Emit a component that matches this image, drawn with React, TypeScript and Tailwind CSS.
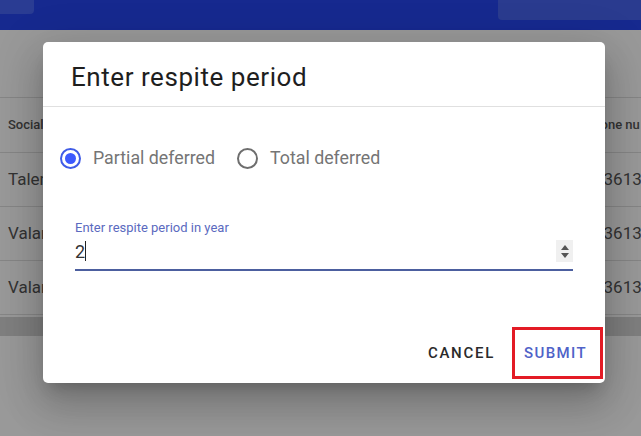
import React from "react";

export default function App() {
  const rows = ["Talent", "Valar", "Valar"];
  return (
    <div className="relative w-[641px] h-[436px] overflow-hidden bg-white" style={{ fontFamily: "Roboto, 'Noto Sans', sans-serif" }}>
      {/* top app bar */}
      <div className="relative z-20 h-[30px] bg-[#16298f] flex justify-between items-start">
        <div className="w-[34px] h-[14px] bg-[#2a3c93] rounded-br-[4px]" />
        <div className="w-[143px] h-[20px] bg-[#2a3b8f] rounded-bl-[4px]" />
      </div>

      {/* page behind */}
      <div className="flex flex-col">
        <div className="h-[67px]" />
        <div className="border-t border-[#e0e0e0]">
          <div className="h-[55px] flex items-center border-b border-[#e0e0e0] pl-[8px] text-[13px] font-medium text-[#555]">
            <span className="w-[577px] shrink-0">Social</span>
            <span className="whitespace-nowrap">Phone nu</span>
          </div>
          {rows.map((r, i) => (
            <div key={i} className="h-[54px] flex items-center border-b border-[#e0e0e0] pl-[8px] text-[17px] text-[#555]">
              <span className="w-[586px] shrink-0">{r}</span>
              <span className="whitespace-nowrap">83613</span>
            </div>
          ))}
          <div className="h-[2px]" />
          <div className="h-[19px] bg-[#d4d4d4]" />
        </div>
      </div>

      {/* backdrop */}
      <div className="absolute left-0 right-0 top-[30px] bottom-0 bg-black/40 z-10" />

      {/* dialog */}
      <div className="absolute z-20 left-[43px] top-[42px] w-[562px] h-[341px] bg-white rounded-[5px] flex flex-col shadow-[0_11px_15px_-7px_rgba(0,0,0,0.2),0_24px_38px_3px_rgba(0,0,0,0.14),0_9px_46px_8px_rgba(0,0,0,0.12)]">
        <div className="h-[65px] pl-[28px] pt-[6px] flex items-center border-b border-[#e0e0e0]">
          <span className="text-[26px] font-normal text-[#1e1e1e] tracking-[0.55px]">Enter respite period</span>
        </div>

        <div className="mt-[41px] pl-[17px] flex items-center h-[20px]">
          <span className="w-[21px] h-[21px] rounded-full border-2 border-[#3f5be6] flex items-center justify-center">
            <span className="w-[11px] h-[11px] rounded-full bg-[#3d5afe]" />
          </span>
          <span className="ml-[12px] text-[17.8px] text-[#757575]">Partial deferred</span>
          <span className="ml-[22px] w-[21px] h-[21px] rounded-full border-2 border-[#6e6e6e]" />
          <span className="ml-[12px] text-[17.8px] text-[#757575]">Total deferred</span>
        </div>

        <div className="mt-[52px] mx-[32px] flex flex-col">
          <span className="text-[13px] leading-[16px] text-[#5b6ac0]">Enter respite period in year</span>
          <div className="mt-[2px] h-[26px] flex items-center justify-between">
            <span className="flex items-center text-[18px] text-[#333]">
              2<span className="w-[1px] h-[20px] bg-[#222]" />
            </span>
            <span className="w-[17px] h-[22px] bg-[#f0f0f0] flex flex-col items-center justify-center gap-[3px]">
              <svg width="8" height="5" viewBox="0 0 8 5"><path d="M0 5 L4 0 L8 5 Z" fill="#555" /></svg>
              <svg width="8" height="5" viewBox="0 0 8 5"><path d="M0 0 L4 5 L8 0 Z" fill="#555" /></svg>
            </span>
          </div>
          <div className="mt-[5px] h-[2px] bg-[#4c5f9f]" />
        </div>

        <div className="mt-auto mb-[19px] mr-[18px] flex justify-end items-center gap-[29px]">
          <span className="text-[15px] font-medium tracking-[1.7px] text-[#2a2a2a]">CANCEL</span>
          <span className="text-[15px] font-medium tracking-[1.4px] text-[#4f62c8]">SUBMIT</span>
        </div>

        {/* highlight annotation */}
        <div className="absolute left-[469px] top-[285px] w-[91px] h-[52px] border-[3px] border-[#e31b25]" />
      </div>
    </div>
  );
}
